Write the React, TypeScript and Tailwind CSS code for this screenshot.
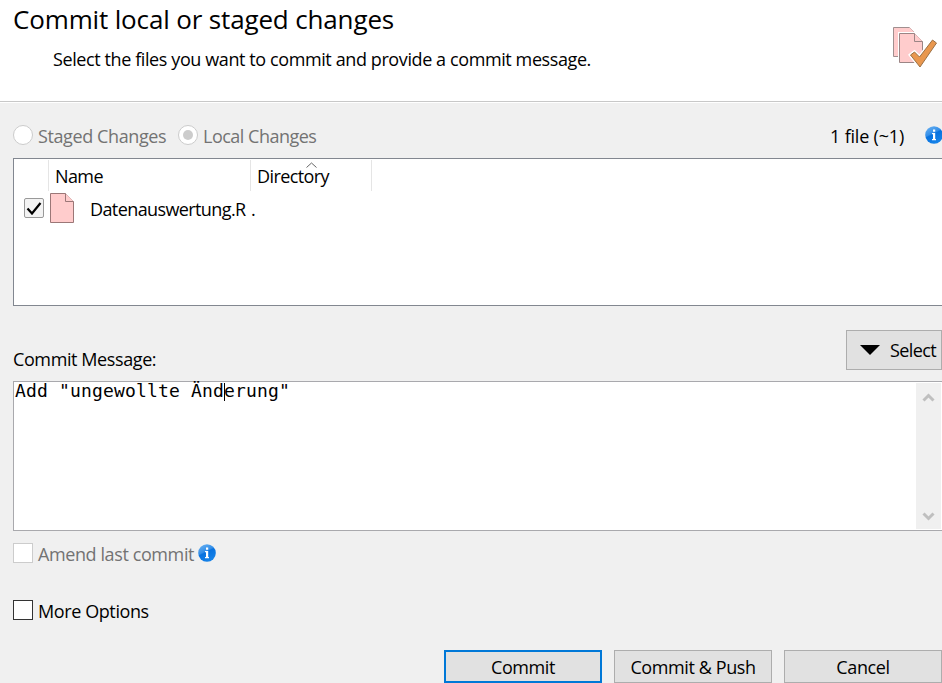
import type { ReactNode } from 'react';

function InfoIcon() {
  return (
    <svg width="18" height="18" viewBox="0 0 18 18" className="block shrink-0">
      <defs>
        <linearGradient id="info" x1="0" y1="0" x2="0.5" y2="1">
          <stop offset="0" stopColor="#6fb5f3" />
          <stop offset="0.48" stopColor="#338ee8" />
          <stop offset="0.55" stopColor="#0872df" />
          <stop offset="1" stopColor="#1682e8" />
        </linearGradient>
      </defs>
      <circle cx="9" cy="9" r="8.8" fill="url(#info)" />
      <path d="M8 3.5h2.2v2.2H8zM7 7h3.2v6H11v1.2H7V13h1V8.2H7z" fill="#fff" />
    </svg>
  );
}

function CommitIcon() {
  return (
    <svg width="46" height="44" viewBox="0 0 46 44" className="block">
      <path d="M17.500 1.500l8 8v21h-24v-29z" fill="#ffcccc" />
      <path d="M17.500 1.500l8 8" stroke="#d8b4b4" />
      <path d="M17.500 1.500h-16v29h24" fill="none" stroke="#a08f8f" />
      <path d="M6 6h18.5l9 9v22.500H6z" fill="#fff" />
      <path d="M22.500 7.500l8 8v21h-23v-29z" fill="#ffcccc" />
      <path d="M22.500 7.500l8 8" stroke="#e0b8b8" />
      <path d="M22.500 7.500h-15v29h23v-21h-8z" fill="none" stroke="#9b8585" />
      <path d="M18.500 29l4-3 5 5L40.500 14l4 3-16.500 24z" fill="#e9974e" stroke="#fff" strokeWidth="3.500" />
      <path d="M18.500 29l4-3 5 5L40.500 14l4 3-16.500 24z" fill="#e9974e" stroke="#9b7045" />
    </svg>
  );
}

function Button({ children, primary }: { children: ReactNode; primary?: boolean }) {
  return (
    <button className={`flex h-[33px] w-[158px] shrink-0 items-center justify-center bg-[#e1e1e1] pt-[1px] ${primary ? 'border-2 border-[#0078d7]' : 'border border-[#adadad]'}`}>
      {children}
    </button>
  );
}

export default function App() {
  return (
    <div className="flex h-[683px] w-[942px] flex-col overflow-hidden bg-[#f0f0f0] font-['Open_Sans',sans-serif] text-[18px] leading-6 tracking-[-0.400px] whitespace-nowrap text-black">
      <header className="flex h-[103px] shrink-0 flex-col border-b border-white bg-white">
        <div className="flex h-[102px] shrink-0 justify-between border-b border-[#c8c8c8]">
          <div className="pt-[1px] pl-[13px]">
            <h1 className="h-9 text-[26px] leading-9 tracking-[-0.150px]">Commit local or staged changes</h1>
            <p className="mt-[10px] pl-10">Select the files you want to commit and provide a commit message.</p>
          </div>
          <div className="pt-[26px] pr-[4px]"><CommitIcon /></div>
        </div>
      </header>

      <section className="flex h-[55px] shrink-0 items-start pt-[22px] pl-[13px] text-[#737373]">
        <span className="size-5 rounded-full border border-[#ccc] bg-white" />
        <span className="-mt-px ml-[5px] w-[140px]">Staged Changes</span>
        <span className="flex size-5 items-center justify-center rounded-full border border-[#ccc] bg-white">
          <span className="size-[10px] rounded-full bg-[#ccc]" />
        </span>
        <span className="-mt-px ml-[5px] tracking-[-0.500px]">Local Changes</span>
        <span className="-mt-px ml-auto tracking-[-0.200px] text-black">1 file (~1)</span>
        <span className="mt-px mr-[-1px] ml-[21px]"><InfoIcon /></span>
      </section>

      <section className="ml-[13px] h-[148px] shrink-0 border-y border-l border-[#828790] bg-white">
        <div className="flex h-8 pt-[1px]">
          <div className="w-[35px] border-r border-[#e5e5e5]" />
          <div className="w-[202px] border-r border-[#e5e5e5] pt-[4px] pl-[6px] tracking-[-0.600px]">Name</div>
          <div className="relative w-[121px] border-r border-[#e5e5e5] pt-[4px] pl-[6px] tracking-[-0.600px]">
            Directory
            <svg className="absolute top-[1px] left-[54px]" width="13" height="8" viewBox="0 0 13 8"><path d="M1.500 6.500l5-4.500 5 4.500" fill="none" stroke="#666" /></svg>
          </div>
        </div>
        <div className="flex h-[34px] items-center pl-[10px]">
          <span className="flex size-5 items-center justify-center rounded-[2px] border border-[#999] bg-[#f3f3f3]">
            <svg width="16" height="14" viewBox="0 0 16 14"><path d="M1.500 7.500l4.500 5L14.500 2" fill="none" stroke="#000" strokeWidth="2.200" /></svg>
          </span>
          <svg className="ml-[6px]" width="24" height="30" viewBox="0 0 24 30">
            <path d="M15.500.5l8 8v21H.5V.5z" fill="#ffcccc" />
            <path d="M15.500.5l8 8" stroke="#e0b8b8" />
            <path d="M15.500.5H.5v29h23v-21h-8z" fill="none" stroke="#9b7777" />
          </svg>
          <span className="ml-[16px] w-[161px] pt-[2px] tracking-[-0.600px]">Datenauswertung.R</span>
          <span className="pt-[2px]">.</span>
        </div>
      </section>

      <section className="flex h-[75px] shrink-0 items-start justify-between pt-6 pl-[13px]">
        <label className="pt-[17px]">Commit Message:</label>
        <button className="flex h-10 w-24 items-center border border-[#adadad] bg-[#e1e1e1] pl-[13px]">
          <svg width="20" height="10" viewBox="0 0 20 10"><path d="M0 0h20L10 10z" /></svg>
          <span className="ml-[10px] tracking-[-0.600px]">Select</span>
        </button>
      </section>

      <section className="ml-[13px] flex h-[150px] shrink-0 justify-between border-y border-l border-[#a9a9ad] bg-white">
        <div className="-mt-px flex pl-[1px] font-['DejaVu_Sans_Mono',monospace] text-[18px] leading-[20px] tracking-[0.160px]">
          <span>Add "ungewollte Änd</span>
          <span className="mt-[2px] -mr-px h-[18px] w-px bg-black" />
          <span>erung"</span>
        </div>
        <div className="mt-[1px] mr-[1px] mb-[1px] flex w-[25px] flex-col items-center justify-between bg-[#f0f0f0] pt-[9px] pb-[7px]">
          <svg width="13" height="11" viewBox="0 0 13 11"><path d="M1.500 8.500l5-5 5 5" fill="none" stroke="#bfbfbf" strokeWidth="3" /></svg>
          <svg width="13" height="11" viewBox="0 0 13 11"><path d="M1.500 2.500l5 5 5-5" fill="none" stroke="#bfbfbf" strokeWidth="3" /></svg>
        </div>
      </section>

      <section className="flex h-[69px] shrink-0 items-start pt-3 pl-[13px] text-[#737373]">
        <span className="size-5 border border-[#ccc] bg-white" />
        <span className="-mt-px ml-[5px] w-[160px]">Amend last commit</span>
        <span className="mt-px"><InfoIcon /></span>
      </section>

      <section className="flex h-[50px] shrink-0 items-start pl-[13px]">
        <span className="size-5 border border-[#333] bg-white" />
        <span className="-mt-px ml-[5px]">More Options</span>
      </section>

      <footer className="flex justify-end gap-3">
        <Button primary>Commit</Button>
        <Button>Commit &amp; Push</Button>
        <Button>Cancel</Button>
      </footer>
    </div>
  );
}
